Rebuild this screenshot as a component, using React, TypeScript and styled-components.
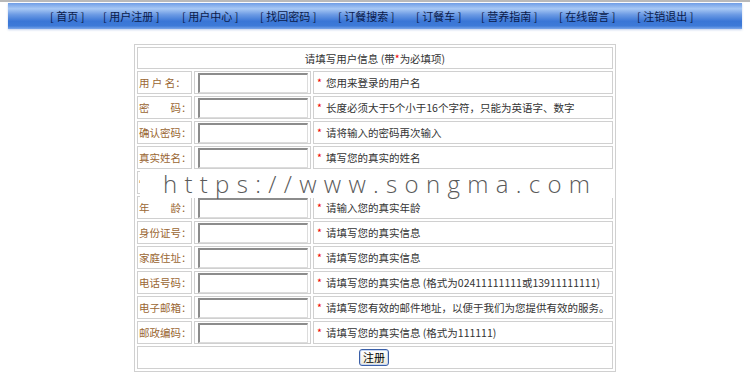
import React from "react";
import styled, { createGlobalStyle } from "styled-components";

const Global = createGlobalStyle`
  html, body { margin: 0; padding: 0; background: #fff; }
  body { font-family: "Noto Sans CJK SC", "Noto Sans", sans-serif; font-size: 10.5px; }
`;

const TopLine = styled.div`
  height: 2px;
  background: #b9b9b9;
`;

const Nav = styled.div`
  margin: 1px 8px 0;
  height: 26px;
  background: linear-gradient(#6f9de6 0%, #a8c8f4 22%, #6b9ae4 45%, #3a76d6 70%, #3d7ad8 88%, #7ea8ea 100%);
  display: flex;
  align-items: center;
  padding-left: 42px;
  box-shadow: 0 1px 2px rgba(90, 130, 200, 0.35);
`;

const NavItem = styled.a<{ w: number }>`
  width: ${(p) => p.w}px;
  flex: none;
  color: #0a1a4a;
  font-size: 11px;
  text-decoration: none;
  white-space: pre;
  line-height: 26px;
`;

const Wrap = styled.div`
  position: relative;
  width: 482px;
  margin: 15px auto 0;
`;

const Table = styled.table`
  width: 100%;
  table-layout: fixed;
  border: 1px solid #d0d0d0;
  border-collapse: separate;
  border-spacing: 2px;
  font-size: 10.5px;
`;

const Col = styled.col<{ w?: number }>`
  width: ${(p) => (p.w ? `${p.w}px` : "auto")};
`;

const Cell = styled.td`
  border: 1px solid #d0d0d0;
  height: 23px;
  padding: 0 2px;
  box-sizing: border-box;
  vertical-align: middle;
`;

const HeadCell = styled(Cell)`
  text-align: center;
  color: #333;
  height: 22px;
`;

const LabelCell = styled(Cell)`
  color: #9a6632;
  white-space: pre;
  padding: 0 0 0 1px;
`;

const InputCell = styled(Cell)`
  padding: 0 2px;
`;

const HintCell = styled(Cell)`
  color: #333;
  padding-left: 3px;
  white-space: nowrap;
`;

const Field = styled.input`
  width: 110px;
  height: 20px;
  box-sizing: border-box;
  border-style: solid;
  border-width: 2px 1px 1px 2px;
  border-color: #8c8c8c #dcdcdc #dcdcdc #8c8c8c;
  background: #fff;
  display: block;
  margin-left: 1px;
`;

const Star = styled.span`
  color: #e00;
  margin-right: 4px;
`;

const HeadStar = styled.span`
  color: #e00;
`;

const ButtonCell = styled(Cell)`
  text-align: center;
  height: 23px;
`;

const Submit = styled.button`
  font-family: inherit;
  font-size: 11px;
  color: #000;
  padding: 0 3px;
  height: 17px;
  line-height: 13px;
  border: 1px solid #3a5fa8;
  border-radius: 3px;
  background: linear-gradient(#ffffff, #ece9d8);
  box-shadow: inset 0 0 0 1px #c6d6f2;
  margin-left: -2px;
  margin-top: -2px;
`;

const Watermark = styled.div`
  position: absolute;
  left: 6px;
  top: 126px;
  width: 473px;
  height: 28px;
  background: #fff;
  color: #5a5a5a;
  font-family: "Open Sans", "DejaVu Sans", sans-serif;
  font-weight: 300;
  font-size: 24px;
  letter-spacing: 7.3px;
  line-height: 28px;
  padding-left: 23px;
  box-sizing: border-box;
  white-space: nowrap;
  pointer-events: none;
`;

const navItems: [string, number][] = [
  ["[ 首页 ]", 53],
  ["[ 用户注册 ]", 79],
  ["[ 用户中心 ]", 78],
  ["[ 找回密码 ]", 78],
  ["[ 订餐搜索 ]", 78],
  ["[ 订餐车 ]", 65],
  ["[ 营养指南 ]", 78],
  ["[ 在线留言 ]", 78],
  ["[ 注销退出 ]", 78],
];

const rows: [string, string][] = [
  ["用 户 名：", "您用来登录的用户名"],
  ["密　　码：", "长度必须大于5个小于16个字符，只能为英语字、数字"],
  ["确认密码：", "请将输入的密码再次输入"],
  ["真实姓名：", "填写您的真实的姓名"],
  ["性　　别：", ""],
  ["年　　龄：", "请输入您的真实年龄"],
  ["身份证号：", "请填写您的真实信息"],
  ["家庭住址：", "请填写您的真实信息"],
  ["电话号码：", "请填写您的真实信息 (格式为02411111111或13911111111)"],
  ["电子邮箱：", "请填写您有效的邮件地址，以便于我们为您提供有效的服务。"],
  ["邮政编码：", "请填写您的真实信息 (格式为111111)"],
];

export default function App() {
  return (
    <>
      <Global />
      <TopLine />
      <Nav>
        {navItems.map(([t, w]) => (
          <NavItem key={t} w={w} href="#">
            {t}
          </NavItem>
        ))}
      </Nav>
      <Wrap>
        <Table>
          <colgroup>
            <Col w={55} />
            <Col w={117} />
            <Col />
          </colgroup>
          <tbody>
            <tr>
              <HeadCell colSpan={3}>
                请填写用户信息 (带<HeadStar>*</HeadStar>为必填项)
              </HeadCell>
            </tr>
            {rows.map(([l, h]) => (
              <tr key={l}>
                <LabelCell>{l}</LabelCell>
                <InputCell>
                  <Field type="text" />
                </InputCell>
                <HintCell>
                  {h && <Star>*</Star>}
                  {h}
                </HintCell>
              </tr>
            ))}
            <tr>
              <ButtonCell colSpan={3}>
                <Submit type="button">注册</Submit>
              </ButtonCell>
            </tr>
          </tbody>
        </Table>
        <Watermark>https://www.songma.com</Watermark>
      </Wrap>
    </>
  );
}
